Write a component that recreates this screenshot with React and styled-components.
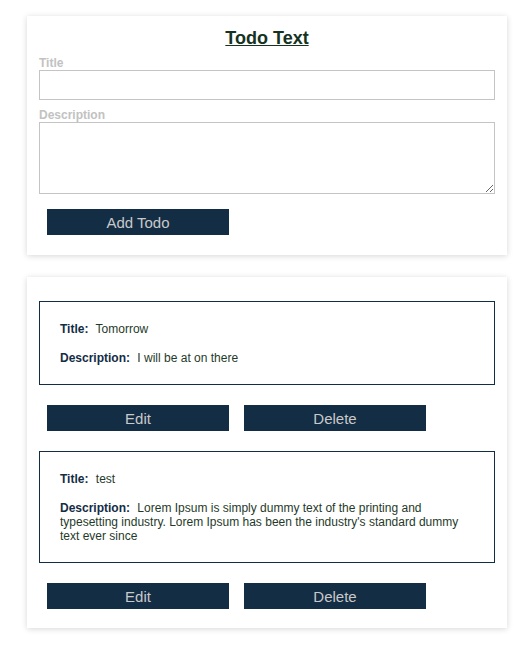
import styled, { createGlobalStyle } from "styled-components";

const GlobalStyle = createGlobalStyle`
  body {
    margin: 0;
    background: #ffffff;
    font-family: "Liberation Sans", Arial, sans-serif;
  }
`;

const todos = [
  { id: 1, title: "Tomorrow", description: "I will be at on there" },
  {
    id: 2,
    title: "test",
    description:
      "Lorem Ipsum is simply dummy text of the printing and typesetting industry. Lorem Ipsum has been the industry's standard dummy text ever since",
  },
];

export default function App() {
  return (
    <>
      <GlobalStyle />
      <Page>
        <Card>
          <Heading>Todo Text</Heading>
          <FieldLabel>Title</FieldLabel>
          <Input type="text" />
          <FieldLabel $top={8}>Description</FieldLabel>
          <TextArea />
          <Button $top={15}>Add Todo</Button>
        </Card>

        <Card>
          {todos.map((todo) => (
            <TodoItem key={todo.id}>
              <TodoBox>
                <Line>
                  <Key>Title:</Key> {todo.title}
                </Line>
                <Line>
                  <Key>Description:</Key> {todo.description}
                </Line>
              </TodoBox>
              <ButtonRow>
                <Button>Edit</Button>
                <Button>Delete</Button>
              </ButtonRow>
            </TodoItem>
          ))}
        </Card>
      </Page>
    </>
  );
}

const Page = styled.div`
  display: flex;
  flex-direction: column;
  gap: 22px;
  padding: 16px 27px;
`;

const Card = styled.div`
  width: 480px;
  box-sizing: border-box;
  padding: 12px;
  background: #fff;
  box-shadow: 0 1px 6px rgba(0, 0, 0, 0.16);
  display: flex;
  flex-direction: column;
`;

const Heading = styled.h2`
  margin: 0;
  font-size: 18px;
  line-height: 21px;
  font-weight: 700;
  text-align: center;
  text-decoration: underline;
  color: #16331f;
`;

const FieldLabel = styled.label`
  display: block;
  margin-top: ${(p) => p.$top ?? 7}px;
  font-size: 12px;
  line-height: 14px;
  font-weight: 700;
  color: #c2c2c2;
`;

const Input = styled.input`
  box-sizing: border-box;
  width: 100%;
  height: 30px;
  margin: 0;
  border: 1px solid #c4c4c4;
  outline: none;
  font-family: inherit;
`;

const TextArea = styled.textarea`
  box-sizing: border-box;
  display: block;
  width: 100%;
  height: 72px;
  margin: 0;
  border: 1px solid #c4c4c4;
  outline: none;
  font-family: inherit;
`;

const Button = styled.button`
  width: 182px;
  height: 26px;
  margin: ${(p) => p.$top ?? 0}px 8px 8px;
  padding: 0;
  border: none;
  background: #132d45;
  color: #c9c9c9;
  font-family: "Liberation Sans", Arial, sans-serif;
  font-size: 15px;
  cursor: pointer;
`;

const TodoItem = styled.div`
  display: flex;
  flex-direction: column;
  margin-top: 12px;

  & + & {
    margin-top: 20px;
  }
`;

const TodoBox = styled.div`
  border: 1px solid #132d45;
  padding: 20px 20px 19px;
  display: flex;
  flex-direction: column;
  gap: 15px;
`;

const Line = styled.p`
  margin: 0;
  font-size: 12px;
  line-height: 14px;
  color: #1f3a2a;
`;

const Key = styled.span`
  font-weight: 700;
  color: #132d45;
  margin-right: 4px;
`;

const ButtonRow = styled.div`
  display: flex;
  gap: 15px;
  padding: 20px 8px 0;

  & > button {
    margin: 0;
  }

  ${TodoItem}:last-child & {
    padding-bottom: 7px;
  }
`;
